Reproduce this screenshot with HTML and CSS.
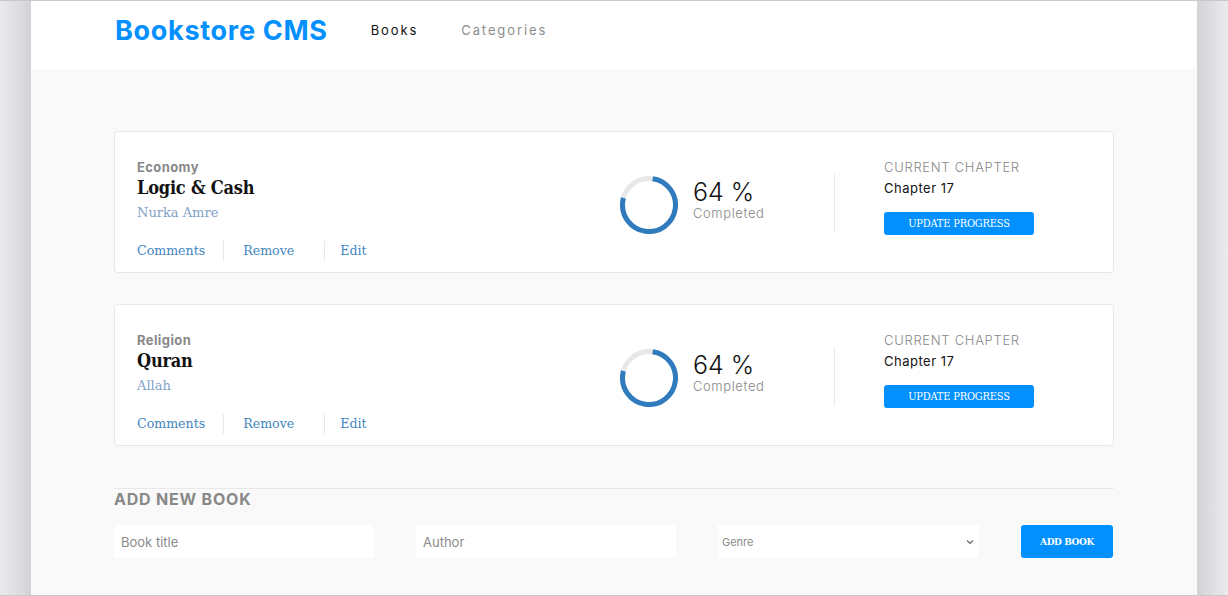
FILE: index.html
```html
<!DOCTYPE html>
<html lang="en">
<head>
<meta charset="utf-8">
<title>Bookstore CMS</title>
<link rel="stylesheet" href="styles.css">
</head>
<body>
<div class="panel">
  <header class="header">
    <h1 class="logo">Bookstore CMS</h1>
    <nav class="nav">
      <a class="nav-link active" href="#">Books</a>
      <a class="nav-link" href="#">Categories</a>
    </nav>
  </header>
  <main class="main">
    <ul class="book-list">
      <li class="card">
        <div class="book-info">
          <p class="genre">Economy</p>
          <h2 class="title">Logic &amp; Cash</h2>
          <p class="author">Nurka Amre</p>
          <div class="actions">
            <button class="action first">Comments</button>
            <button class="action mid">Remove</button>
            <button class="action last">Edit</button>
          </div>
        </div>
        <div class="progress">
          <svg class="ring" width="58" height="58" viewBox="0 0 58 58">
            <circle cx="29" cy="29" r="26.5" fill="none" stroke="#e8e8e8" stroke-width="5"/>
            <circle cx="29" cy="29" r="26.5" fill="none" stroke="#307bbe" stroke-width="5" stroke-dasharray="127.6 166.5" transform="rotate(-82 29 29)"/>
          </svg>
          <div class="percent-box">
            <p class="percent">64 %</p>
            <p class="completed">Completed</p>
          </div>
        </div>
        <div class="chapter">
          <p class="chapter-label">CURRENT CHAPTER</p>
          <p class="chapter-name">Chapter 17</p>
          <button class="update-btn">UPDATE PROGRESS</button>
        </div>
      </li>
      <li class="card">
        <div class="book-info">
          <p class="genre">Religion</p>
          <h2 class="title">Quran</h2>
          <p class="author">Allah</p>
          <div class="actions">
            <button class="action first">Comments</button>
            <button class="action mid">Remove</button>
            <button class="action last">Edit</button>
          </div>
        </div>
        <div class="progress">
          <svg class="ring" width="58" height="58" viewBox="0 0 58 58">
            <circle cx="29" cy="29" r="26.5" fill="none" stroke="#e8e8e8" stroke-width="5"/>
            <circle cx="29" cy="29" r="26.5" fill="none" stroke="#307bbe" stroke-width="5" stroke-dasharray="127.6 166.5" transform="rotate(-82 29 29)"/>
          </svg>
          <div class="percent-box">
            <p class="percent">64 %</p>
            <p class="completed">Completed</p>
          </div>
        </div>
        <div class="chapter">
          <p class="chapter-label">CURRENT CHAPTER</p>
          <p class="chapter-name">Chapter 17</p>
          <button class="update-btn">UPDATE PROGRESS</button>
        </div>
      </li>
    </ul>
    <section class="add-book">
      <h3 class="add-title">ADD NEW BOOK</h3>
      <form class="add-form">
        <input class="field" type="text" placeholder="Book title">
        <input class="field" type="text" placeholder="Author">
        <div class="select-wrap">
          <select class="select">
            <option>Genre</option>
          </select>
          <svg class="chevron" width="8" height="6" viewBox="0 0 8 6"><path d="M1 1.5 L4 4.5 L7 1.5" fill="none" stroke="#666" stroke-width="1.2"/></svg>
        </div>
        <button class="add-btn" type="button">ADD BOOK</button>
      </form>
    </section>
  </main>
</div>
</body>
</html>
```

FILE: styles.css
```css
* { box-sizing: border-box; }

html, body { height: 100%; }

body {
  margin: 0;
  border-top: 1px solid #c9c9cb;
  border-bottom: 1px solid #c9c9cb;
  background: linear-gradient(90deg, #ebebed 0, #d3d3d7 31px, #d3d3d7 1197px, #ebebed 1228px);
  font-family: Inter, "Noto Sans", sans-serif;
  color: #121212;
}

p, h1, h2, h3 { margin: 0; }

.panel {
  width: 1166px;
  height: 100%;
  margin: 0 auto;
  background: #f9f9f9;
  overflow: hidden;
}

.header {
  height: 68px;
  background: #fff;
  display: flex;
  align-items: center;
  padding: 0 84px 10px;
}

.logo {
  font-size: 27px;
  font-weight: 700;
  color: #0290ff;
  letter-spacing: 0.7px;
  line-height: 1;
}

.nav {
  display: flex;
  gap: 43px;
  margin-left: 43px;
}

.nav-link {
  font-size: 13px;
  letter-spacing: 1.9px;
  color: #121212;
  text-decoration: none;
  opacity: 0.5;
}

.nav-link.active { opacity: 1; }

.main {
  padding: 62px 83px 0;
}

.book-list {
  list-style: none;
  margin: 0;
  padding: 0;
  display: flex;
  flex-direction: column;
  gap: 31px;
}

.card {
  height: 142px;
  background: #fff;
  border: 1px solid #e8e8e8;
  border-radius: 4px;
  display: flex;
  align-items: flex-start;
  padding: 0 79px 0 22px;
}

.book-info {
  flex: 1;
  margin-top: 27px;
}

.genre {
  font-size: 13px;
  font-weight: 700;
  line-height: 16px;
  letter-spacing: 0.4px;
  color: #888;
}

.title {
  font-family: "Roboto Slab", "DejaVu Serif", serif;
  font-stretch: condensed;
  font-size: 18px;
  font-weight: 700;
  line-height: 26px;
  letter-spacing: -0.2px;
  color: #121212;
}

.author {
  font-family: "Roboto Slab", "DejaVu Serif", serif;
  font-size: 13px;
  line-height: 20px;
  margin-top: 2px;
  color: #7fa2c8;
}

.actions {
  display: flex;
  align-items: center;
  margin-top: 18px;
  height: 20px;
}

.action {
  font-family: "Roboto Slab", "DejaVu Serif", serif;
  font-size: 12.6px;
  color: #4386bf;
  background: none;
  border: 0;
  padding: 0;
  line-height: 20px;
  height: 20px;
}

.action.first { padding-right: 18px; border-right: 1px solid #e8e8e8; }
.action.mid { padding: 0 30px 0 19px; border-right: 1px solid #e8e8e8; }
.action.last { padding-left: 15px; }

.progress {
  width: 215px;
  height: 59px;
  margin-top: 42px;
  border-right: 1px solid #e8e8e8;
  display: flex;
  align-items: center;
}

.ring { display: block; margin-top: 3px; }

.percent-box {
  margin-left: 15px;
  padding-bottom: 6px;
}

.percent {
  font-size: 25px;
  font-weight: 300;
  line-height: 24px;
  color: #121212;
}

.completed {
  font-size: 13px;
  font-weight: 300;
  line-height: 18px;
  letter-spacing: 0.6px;
  color: #888;
}

.chapter {
  width: 150px;
  margin-left: 49px;
  margin-top: 27px;
}

.chapter-label {
  font-size: 13px;
  font-weight: 300;
  line-height: 16px;
  letter-spacing: 0.7px;
  color: #888;
  white-space: nowrap;
}

.chapter-name {
  font-size: 13px;
  line-height: 18px;
  margin-top: 4px;
  letter-spacing: 0.5px;
  color: #121212;
}

.update-btn {
  display: block;
  width: 150px;
  height: 23px;
  margin-top: 15px;
  background: #0290ff;
  color: #fff;
  border: 0;
  border-radius: 3px;
  font-family: "Roboto Slab", "DejaVu Serif", serif;
  font-stretch: condensed;
  font-size: 11px;
  letter-spacing: -0.2px;
  padding: 0;
}

.add-book {
  margin-top: 42px;
  border-top: 1px solid #e8e8e8;
}

.add-title {
  font-size: 16px;
  font-weight: 700;
  line-height: 20px;
  color: #888;
  letter-spacing: 0.8px;
}

.add-form {
  display: flex;
  gap: 42px;
  margin-top: 16px;
}

.field {
  width: 260px;
  height: 33px;
  border: 0;
  background: #fff;
  padding: 0 7px;
  font-family: Inter, "Noto Sans", sans-serif;
  font-size: 13px;
  color: #121212;
  outline: none;
}

.field::placeholder { color: #8a8a8a; }

.select-wrap {
  position: relative;
  width: 261px;
  height: 33px;
}

.select {
  appearance: none;
  -webkit-appearance: none;
  width: 100%;
  height: 100%;
  border: 0;
  border-radius: 0;
  background: #fff;
  padding: 0 4px;
  font-family: Inter, "Noto Sans", sans-serif;
  font-size: 11px;
  color: #8a8a8a;
  outline: none;
}

.chevron {
  position: absolute;
  right: 5px;
  top: 14px;
  pointer-events: none;
}

.add-btn {
  width: 92px;
  height: 33px;
  background: #0290ff;
  color: #fff;
  border: 0;
  border-radius: 3px;
  font-family: "Roboto Slab", "DejaVu Serif", serif;
  font-stretch: condensed;
  font-size: 10px;
  font-weight: 700;
  letter-spacing: -0.4px;
  padding: 0;
}
```
